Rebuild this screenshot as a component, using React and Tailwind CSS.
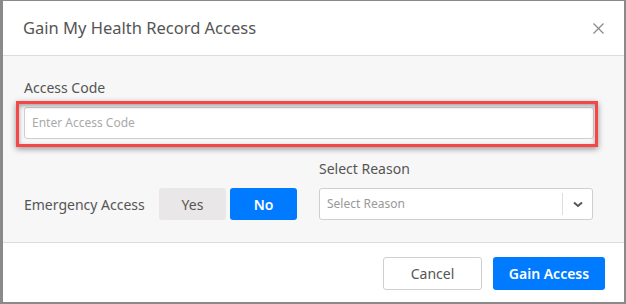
import React from "react";

export default function App() {
  return (
    <div
      className="w-[626px] h-[304px] bg-[#8a8a8a] pt-[1px] pl-[3px] pr-[2px] pb-[2px]"
      style={{ fontFamily: '"Noto Sans", "Open Sans", sans-serif' }}
    >
      <div className="bg-white h-full flex flex-col">
        {/* Header */}
        <div className="h-[55px] flex items-center justify-between pl-[20px] pr-[20px] border-b border-[#dcdcdc] shrink-0">
          <h2 className="text-[16.5px] text-[#555] leading-none">Gain My Health Record Access</h2>
          <button className="w-[12px] h-[12px] flex items-center justify-center text-[#8a8a8a]">
            <svg width="11" height="11" viewBox="0 0 11 11" fill="none" stroke="currentColor" strokeWidth="1.2">
              <line x1="0.5" y1="0.5" x2="10.5" y2="10.5" />
              <line x1="10.5" y1="0.5" x2="0.5" y2="10.5" />
            </svg>
          </button>
        </div>

        {/* Body */}
        <div className="relative flex-1 bg-[#f7f7f7] pl-[21px] pr-[30px] pt-[22px] border-b border-[#dcdcdc]">
          <label className="block text-[14px] leading-[20px] text-[#555]">Access Code</label>
          <div className="mt-[9px] h-[32px] bg-white border border-[#cfcfcf] rounded-[3px] flex items-center px-[7px]">
            <span className="text-[12px] text-[#aaa]">Enter Access Code</span>
          </div>

          {/* annotation highlight */}
          <div className="absolute left-[13px] top-[45px] w-[582px] h-[46px] border-[3px] border-[#f44848] shadow-[0_2px_6px_rgba(0,0,0,0.4),inset_0_2px_4px_rgba(0,0,0,0.35)] pointer-events-none" />

          <div className="mt-[20px] grid grid-cols-[274px_274px] gap-x-[21px]">
            <div className="flex items-end">
              <div className="flex items-center h-[32px]">
                <span className="text-[14px] text-[#555] w-[135px]">Emergency Access</span>
                <div className="flex gap-[4px]">
                  <button className="w-[67px] h-[32px] rounded-[3px] bg-[#e9e7e7] text-[14px] text-[#555]">Yes</button>
                  <button className="w-[67px] h-[32px] rounded-[3px] bg-[#007bff] text-[14px] font-semibold text-white">No</button>
                </div>
              </div>
            </div>
            <div>
              <label className="block text-[14px] leading-[20px] text-[#555]">Select Reason</label>
              <div className="mt-[9px] h-[32px] bg-white border border-[#cfcfcf] rounded-[3px] flex items-center">
                <span className="flex-1 pl-[7px] text-[12px] text-[#999]">Select Reason</span>
                <div className="h-[22px] w-px bg-[#ddd]" />
                <div className="w-[29px] flex items-center justify-center text-[#555]">
                  <svg width="10" height="7" viewBox="0 0 10 7" fill="none" stroke="currentColor" strokeWidth="2">
                    <polyline points="1,1.5 5,5 9,1.5" />
                  </svg>
                </div>
              </div>
            </div>
          </div>
        </div>

        {/* Footer */}
        <div className="h-[59px] shrink-0 flex items-start justify-end gap-[11px] pt-[14px] pr-[19px]">
          <button className="w-[99px] h-[33px] rounded-[3px] border border-[#cfcfcf] bg-white text-[14px] text-[#555]">Cancel</button>
          <button className="w-[112px] h-[33px] rounded-[3px] bg-[#007bff] text-[14px] font-semibold text-white">Gain Access</button>
        </div>
      </div>
    </div>
  );
}
